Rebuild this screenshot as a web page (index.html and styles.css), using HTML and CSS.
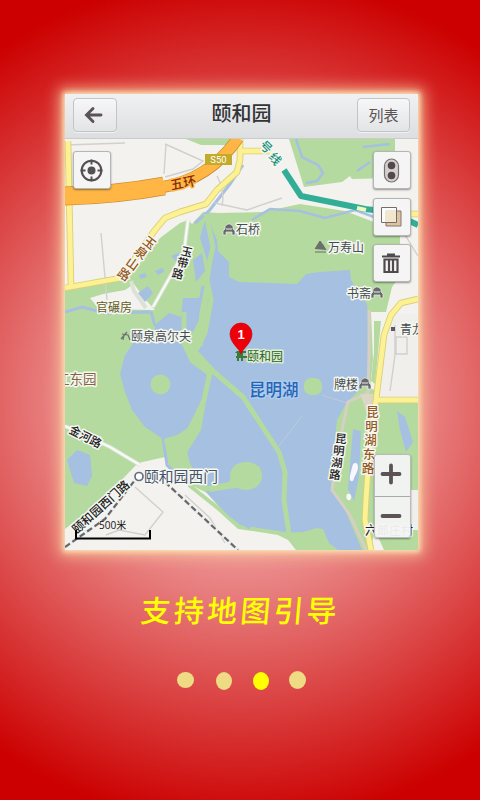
FILE: index.html
```html
<!DOCTYPE html>
<html lang="zh-CN">
<head>
<meta charset="utf-8">
<title>支持地图引导</title>
<link rel="stylesheet" href="styles.css">
</head>
<body>
<main class="page">
  <section class="phone">
    <header class="bar">
      <button class="btn back" aria-label="返回"><svg width="20" height="18" viewBox="0 0 20 18"><path d="M9 2.500 2.500 9 9 15.500M3 9H17" fill="none" stroke="#5b5355" stroke-width="2.900" stroke-linecap="round"/></svg></button>
      <h1 class="title">颐和园</h1>
      <button class="btn list">列表</button>
    </header>
    <div class="map">
      <svg class="canvas" width="353" height="411" viewBox="65 139 353 411">
        <defs>
          <g id="hall"><path d="M-6 5V1l2-2v-3l3-2h2l3 2v3l2 2v4H3V2h-6v3z" fill="#68696c" stroke="#eee" stroke-width=".7"/><path d="M-3-1h6" stroke="#eee"/></g>
        </defs>
        <rect x="65" y="139" width="353" height="411" fill="#f3f2ee"/>
        <!-- parkland -->
        <g fill="#b4daa0">
          <path d="M65 290 122 279 141 262 160 238 180 223 188 220 192 224 203 212 218 213 262 212 300 204 345 211 400 232 400 276 392 287 386 312 371 312 373 360 370 388 400 402H418V550H384L375 530 370 550H65z"/>
          <path d="M289 139H395V178L352 179 350 176 342 182 304 187z"/>
          <path d="M186 139h53l-13 6h-25z"/>
          <path d="M374 321l7 0-6 63-4-3 3-28z"/>
        </g>
        <path d="M65 529 84 514 112 490 138 463 165 457 170 468 187 483 207 493 224 513 246 530 270 531 288 540 296 550H65z" fill="#f3f2ee"/>
        <path d="M392 314h26v87h-44zM410 490h8v40h-8z" fill="#f0efec"/>
        <path d="M90 298l13-4 22-4 9-6 11 15 10 11-56-1z" fill="#f3f2ee"/>
        <!-- water -->
        <g fill="#a5c0e0">
          <path d="M207 213 213 231 217 240 218 251 229 262 229 277 239 282 297 284 306 274 319 272 350 270 351 280 358 292 367 304 369 330 368 382 347 402 337 420 333 455 331 490 345 510 362 550H338L329 543 323 529 302 532 288 534 241 526 225 513 209 491 228 488 243 488 261 476 260 467 250 462 235 465 229 482 208 486 194 472 186 454 201 430 210 379 190 357 203 345 208 300 207 260 200 238z"/>
          <path d="M134 342 147 339 180 342 190 357 208 376 205 403 191 426 177 435 163 439 145 427 132 410 125 392 120 374 125 355z"/>
          <path d="M67 460 77 450 90 455 92 476 87 486 74 483z"/>
          <path d="M155 325l14-12 12 4 2-19h16v22l-6 12-38 1z"/>
          <path d="M193 260l9-7 3 18-9 11zM138 293l10-7 5 7-8 9zM139 275l6-2 2 4-7 2zM155 271l8-3 1 4-6 3zM171 256l10-4-4 10z"/>
          <path d="M353 429l8 2-2 45-5 25-6-12zM397 411l8 6 8 25-7 10-6-22z"/>
        </g>
        <g fill="none" stroke="#a5c0e0" stroke-width="3">
          <path d="M243 165 230 184 209 211 195 223M65 312 82 307 105 313 151 312M151 312 155 326M163 438 167 465 184 482M203 286 197 318"/>
          <path d="M252 220 270 209 300 211 325 218 355 210 385 221M296 139 302 157 318 165 323 173 317 181 306 183M363 147l27-3M357 171l13-9" stroke-width="2.5"/>
        </g>
        <path d="M206 214 213 247 210 260 207 280 211 300 205 333 196 350" fill="none" stroke="#b4daa0" stroke-width="5"/>
        <path d="M184 312 184 342 190 355 213 371 243 397 279 452 285 472 284 500 289 534M210 372 204 400 192 425 181 444" fill="none" stroke="#b4daa0" stroke-width="5"/>
        <path d="M180 340 196 349 214 368 211 378 190 362z" fill="#b4daa0"/>
        <path d="M189 485 219 509 239 527 285 534 312 535 330 552" fill="none" stroke="#b4daa0" stroke-width="4"/>
        <path d="M285 534 304 532 316 528 323 529 325 538 332 550H309z" fill="#b4daa0"/>
        <g fill="#b4daa0">
          <circle cx="160.500" cy="384.500" r="10"/><rect x="304" y="378" width="18" height="17" rx="7"/><ellipse cx="246" cy="476" rx="16" ry="14"/><path d="M206 489l25-6 4 5-25 4zM164 440l21-6 10-7-8 24 7 30-24-17z"/>
        </g>
        <path d="M353 464c6-4 6 5 3 10s-2 8-5 7 0-9 2-17M347 494c6-2 5 8 1 6-2-1-2-4-1-6" fill="#f7f7ff"/>
        <path d="M207 491 230 515 250 528" fill="none" stroke="#a5c0e0" stroke-width="3"/>
        <path d="M322 395 347 403M275 451 302 416" fill="none" stroke="#becbd8" stroke-width="1"/>
        <!-- minor paths -->
        <path d="M369 310v45l-1 38-20 9-6 28-10 60 18 25 17 37" fill="none" stroke="#d6cfc4" stroke-width="3"/>
        <path d="M360 394h19v14l-12 6-4-12z" fill="#dcd6c5"/>
        <path d="M166 144 164 174M165 144l38 17-10 8-28 8M215 203l32 7 35-12M101 233l6 67M65 145l60-2M217 176q8 15 5 30M385 202l33 54M395 325v30l-5 36M396 337h11v17h-11zM135 487l28 25-18 23-26-5-13 5M185 495l25 23 15 25" fill="none" stroke="#d2d0ce" stroke-width="1.400"/>
        <path d="M65 426 110 447 140 465M188 220 184 252 153 307M131 281l3 10 12 17" fill="none" stroke="#dce2d7" stroke-width="4"/>
        <path d="M65 426 110 447 140 465M188 220 184 252 153 307" fill="none" stroke="#f8faf6" stroke-width="2.200"/>
        <!-- main roads and metro -->
        <g fill="none" stroke-linejoin="round">
          <path d="M68 141 71 286M65 288 121 278 155 230 165 218 180 212 206 204 217 190 237 172 240 160V139M240 151h30M391 214h27M418 299 401 303 391 315 384 335 376 400 370 440 366 500 365 520 371 550M377 400h41" stroke="#dccf79" stroke-width="6.600"/>
          <path d="M68 141 71 286M65 288 121 278 155 230 165 218 180 212 206 204 217 190 237 172 240 160V139M240 151h30M391 214h27M418 299 401 303 391 315 384 335 376 400 370 440 366 500 365 520 371 550M377 400h41" stroke="#fcf193" stroke-width="4.800"/>
          <path d="M65 196Q115 195 164 186M163 187Q210 179 238 138" stroke="#c98c32" stroke-width="12"/>
          <path d="M65 196Q115 195 164 186" stroke="#c98c32" stroke-width="19"/>
          <path d="M65 196Q115 195 164 186" stroke="#ffb645" stroke-width="17.500"/>
          <path d="M162 187Q210 179 238 138" stroke="#ffb645" stroke-width="10.500"/>
          <path d="M284 170 301 196 365 209 391 212 418 225" stroke="#32ae96" stroke-width="6"/>
          <path d="M357 208l9 2" stroke="#eefac0" stroke-width="4"/>
          <path d="M65 547 105 519 135 480 148 475M165 482 238 550" stroke="#eee" stroke-width="4"/>
          <path d="M65 547 105 519 135 480M165 482 238 550" stroke="#66686a" stroke-width="2.200" stroke-dasharray="6 3"/>
        </g>
        <rect x="205" y="154" width="27" height="11" fill="#c3aa28"/>
        <text x="218.500" y="163" class="shield">S50</text>
        <!-- labels -->
        <g class="label">
          <text x="236" y="234">石桥</text><text x="328" y="252">万寿山</text><text x="347" y="298">书斋</text><text x="334" y="389">牌楼</text>
          <text x="131" y="341">颐泉高尔夫</text><text x="400" y="334">青龙</text>
          <text x="96" y="312" class="olive">官碾房</text><text x="247" y="361" class="green">颐和园</text>
          <text x="56" y="384" class="brown">江东园</text>
          <text x="249" y="396" class="lake">昆明湖</text>
          <text x="144" y="482" class="gate">颐和园西门</text>
          <text x="365" y="535" class="road">六郎庄村</text>
        </g>
        <use href="#hall" x="229" y="230"/><use href="#hall" x="377" y="293"/><use href="#hall" x="365" y="384"/>
        <path d="M315 249l5-8 3 4 3 5M315 252h11" fill="#6b6e6b" stroke="#6b6e6b"/>
        <path d="M127 332l-6 7M122 334l6 1 2 5M124 335l-1 5" fill="none" stroke="#69716c" stroke-width="1.200"/>
        <rect x="391" y="327" width="4" height="4" fill="#5c5962"/>
        <circle cx="139" cy="476.500" r="4" fill="#fff" stroke="#666e85" stroke-width="1.700"/>
        <g class="label road mid">
          <text transform="translate(183 182) rotate(-12)" class="ring">五环</text>
          <g class="tan"><text transform="translate(150 242) rotate(38)">玉</text><text transform="translate(141.500 252) rotate(38)">泉</text><text transform="translate(133 263) rotate(35)">山</text><text transform="translate(124.500 273.500) rotate(35)">路</text></g>
          <text transform="translate(187 251) rotate(12)">玉</text><text transform="translate(183 262) rotate(12)">带</text><text transform="translate(178 273) rotate(12)">路</text>
          <text transform="translate(86 436) rotate(27)">金河路</text>
          <text transform="translate(100 506) rotate(-42)" class="west">颐和园西门路</text>
          <text transform="translate(341 438) rotate(6)">昆</text><text transform="translate(339 450) rotate(6)">明</text><text transform="translate(337 462) rotate(6)">湖</text><text transform="translate(335 474) rotate(6)">路</text>
          <g class="tan east"><text x="372.500" y="411">昆</text><text x="371.500" y="425">明</text><text x="370.500" y="439">湖</text><text x="369" y="453">东</text><text x="368" y="467">路</text></g>
          <g class="metro"><text transform="translate(267 146) rotate(45)">号</text><text transform="translate(276 158) rotate(50)">线</text></g>
        </g>
        <path d="M237 351h9v2h-3v3h4v2h-4v3h-2v-3h-2v3h-2v-3h-1v-2h1v-3h-2z" fill="#3d7a34"/>
        <path d="M241 354C239 348 230 343 230 334a11 11 0 0 1 22 0c0 9-9 14-11 20z" fill="#ed0009" stroke="#c80000" stroke-width=".6"/>
        <text x="241" y="339" class="pin">1</text>
        <text x="99" y="529" class="scale">500米</text>
        <path d="M76 530v8.500h74V530" fill="none" stroke="#000" stroke-width="2"/>
      </svg>
      <button class="tool locate" aria-label="定位"><svg width="25" height="25" viewBox="-12.5 -12.500 25 25"><circle r="9.800" fill="none" stroke="#575052" stroke-width="2.100"/><circle r="4" fill="#575052"/><path d="M0-11v5M0 11V6M-11 0h5M11 0H6" stroke="#575052" stroke-width="2"/></svg></button>
      <div class="tools">
        <button class="tool" aria-label="路况"><svg width="17" height="25" viewBox="0 0 17 25"><rect x="1.500" y="1" width="14" height="23" rx="7" fill="#d5d0cf" stroke="#777071" stroke-width="1.200"/><circle cx="8.500" cy="7.500" r="3.800" fill="#51494b"/><circle cx="8.500" cy="17.500" r="3.800" fill="#51494b"/></svg></button>
        <button class="tool" aria-label="图层"><svg width="23" height="22" viewBox="0 0 23 22"><path d="M6 5h15v15H6z" fill="#d9c5a4" stroke="#8b7564"/><path d="M1.500 1.500h15v15h-15z" fill="#fff" fill-opacity=".65" stroke="#766d69"/><path d="M6 5h10v11H6z" fill="#f2e6cc"/></svg></button>
        <button class="tool" aria-label="删除"><svg width="20" height="21" viewBox="0 0 20 21"><path d="M1 3.500h18M6 1.500h8" stroke="#514a4c" stroke-width="2"/><path d="M3.500 6.500h13v12.500h-13zM8 6v13M12 6v13" fill="none" stroke="#514a4c" stroke-width="2.200"/></svg></button>
      </div>
      <div class="zoom">
        <button aria-label="放大"><svg width="22" height="22" viewBox="0 0 22 22"><path d="M2.500 11h17M11 2.500v17" stroke="#5b5355" stroke-width="3.800" stroke-linecap="round"/></svg></button>
        <button aria-label="缩小"><svg width="22" height="22" viewBox="0 0 22 22"><path d="M2.500 11h17" stroke="#5b5355" stroke-width="3.800" stroke-linecap="round"/></svg></button>
      </div>
    </div>
  </section>
  <h2 class="caption">支持地图引导</h2>
  <nav class="dots"><i class="dot first"></i><i class="dot"></i><i class="dot active"></i><i class="dot last"></i></nav>
</main>
</body>
</html>
```
FILE: styles.css
```css
* { box-sizing: border-box; }
body { margin: 0; font-family: "Liberation Sans", "Noto Sans CJK SC", sans-serif; }
.page {
  width: 480px; height: 800px; padding: 94px 62px 0 65px; overflow: hidden;
  background: radial-gradient(circle 425px at 240px 400px, #ffe6e6 0, #c00 100%);
}
.phone { width: 353px; height: 456px; box-shadow: 0 0 5px 2px #fbe0b5, 0 0 14px 6px #f8c79acc; }
.bar {
  height: 45px; padding: 0 8px; display: grid; grid-template-columns: 53px 1fr 53px; align-items: center;
  background: linear-gradient(#f0f1f2, #dcdee0); border-bottom: 1px solid #c9cccd;
}
button { font: inherit; padding: 0; margin: 0; display: flex; align-items: center; justify-content: center; }
.btn { height: 34px; border: 1px solid #c2c5c8; border-radius: 4px; background: linear-gradient(#f7f7f8, #e3e4e6); color: #5a5355; box-shadow: 0 1px 0 #fff8; margin-top: -3px; }
.back { width: 44px; padding-right: 2px; }
.list { font-size: 15px; }
.title { margin: -5px 0 0; text-align: center; font-size: 20px; line-height: 30px; font-weight: 500; color: #333436; }
.map { position: relative; width: 353px; height: 411px; overflow: hidden; }
.canvas { display: block; }
.tool { width: 38px; height: 38px; border: 1px solid #b4b5b5; border-radius: 3px; background: #f5f5f5; box-shadow: 0 1px 2px #0006; padding-right: 2px; }
.locate { position: absolute; left: 8px; top: 12px; }
.tools { position: absolute; left: 308px; top: 12px; display: grid; gap: 8.500px; }
.zoom { position: absolute; left: 309px; top: 315px; width: 37px; height: 84px; border: 1px solid #bbb; border-radius: 3px; overflow: hidden; background: #f4f4f4f2; display: grid; grid-template-rows: 1fr 1fr; box-shadow: 0 1px 2px #0006; }
.zoom button { border: 0; background: none; padding: 0 3px 3px 0; }
.zoom button + button { border-top: 1px solid #aaa; }
.label text { font-family: "Noto Sans CJK SC", sans-serif; font-size: 12px; fill: #454d50; paint-order: stroke; stroke: #f5f7f2; stroke-width: 3px; stroke-linejoin: round; }
.label .olive { fill: #665e25; }
.label .green { fill: #286524; stroke: #e0edd5; }
.label .brown { fill: #86643d; font-size: 13.500px; }
.label .lake { fill: #2365b8; stroke: #b0cbea; font-size: 16.500px; font-weight: 500; }
.label .gate { fill: #46526a; font-size: 14.800px; }
.label .road, .label.road text { fill: #222; }
.mid text { text-anchor: middle; dominant-baseline: central; font-size: 11.500px; font-weight: 500; }
.label.mid .ring { fill: #862b09; stroke: #ffb645; font-size: 13px; }
.label.mid .tan text { fill: #965a21; font-size: 12.500px; }
.label.mid .west { font-size: 12px; }
.label.mid .metro text { fill: #149078; font-size: 12px; }
.shield { font: 9.500px Roboto, sans-serif; fill: #fff; text-anchor: middle; }
.pin { font: bold 13px "Liberation Sans", sans-serif; fill: #fff; text-anchor: middle; }
.scale { font: 10px "Open Sans", "Noto Sans CJK SC", sans-serif; fill: #111; }
.caption {
  margin: 36px 0 0 76px; width: 200px; height: 46px; white-space: nowrap; color: #ff0;
  font: 500 30px/46px "Noto Sans CJK SC", sans-serif; letter-spacing: 3.200px; transform: skewX(-5deg);
}
.dots { display: flex; align-items: center; margin: 39px 0 0 112px; height: 20px; }
.dot { width: 16px; height: 18px; margin-right: 21px; border-radius: 50%; background: #eedb83; }
.first { width: 17px; height: 16px; margin-right: 22px; margin-top: -2px; }
.active { background: #ff0; margin-right: 20px; }
.last { width: 17px; margin-top: -2px; }
```
